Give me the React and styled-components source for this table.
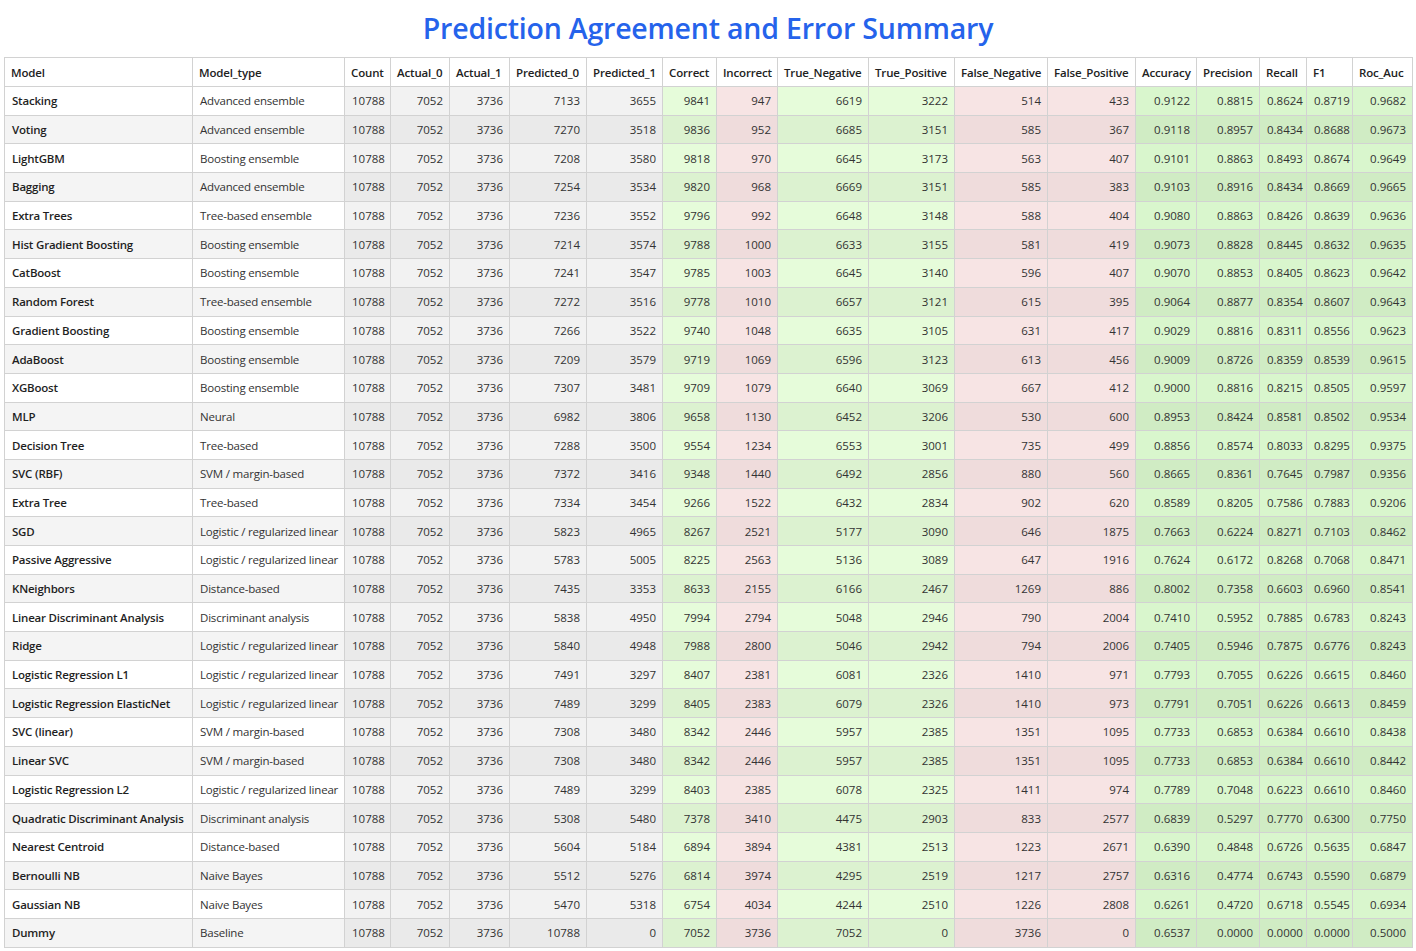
import styled, { createGlobalStyle } from "styled-components";

const GlobalStyle = createGlobalStyle`
  body {
    margin: 0;
    background: #ffffff;
    font-family: "Open Sans", "Noto Sans", sans-serif;
  }
`;

const Page = styled.div`
  padding: 0 4px 4px 4px;
`;

const Title = styled.h2`
  margin: 0;
  height: 57px;
  line-height: 57px;
  text-align: center;
  color: #2563eb;
  font-size: 28.5px;
  font-weight: 600;
  letter-spacing: -0.2px;
`;

const Table = styled.table`
  width: 1408px;
  table-layout: fixed;
  border-collapse: collapse;
  font-size: 11.5px;
  color: #333;
`;

const HeadCell = styled.th`
  height: 28px;
  padding: 0 5px 0 6px;
  border: 1px solid #d2d2d2;
  background: #ffffff;
  color: #222;
  font-weight: 600;
  letter-spacing: -0.15px;
  text-align: left;
  white-space: nowrap;
  overflow: hidden;
`;

const shades = {
  name: ["#ffffff", "#f4f4f4"],
  type: ["#ffffff", "#f4f4f4"],
  count: ["#f2f2f2", "#eaeaea"],
  good: ["#e6fcda", "#dcf2d0"],
  bad: ["#f7e4e4", "#efdcdc"],
  metric: ["#d9f6cd", "#d0ecc4"],
};

const spacing = { name: "-0.2px", type: "-0.2px" };

const Cell = styled.td`
  height: 27.7px;
  padding: 0 6px 0 7px;
  border: 1px solid #d2d2d2;
  background: ${(p) => shades[p.$kind][p.$even ? 1 : 0]};
  font-weight: ${(p) => (p.$kind === "name" ? 600 : 400)};
  letter-spacing: ${(p) => spacing[p.$kind] || "0"};
  color: ${(p) => (p.$kind === "name" ? "#1f1f1f" : "#333")};
  text-align: ${(p) => (p.$kind === "name" || p.$kind === "type" ? "left" : "right")};
  white-space: nowrap;
  overflow: hidden;
`;

const columns = [
  { key: "Model", width: 188, kind: "name" },
  { key: "Model_type", width: 152, kind: "type" },
  { key: "Count", width: 46, kind: "count" },
  { key: "Actual_0", width: 59, kind: "count" },
  { key: "Actual_1", width: 60, kind: "count" },
  { key: "Predicted_0", width: 77, kind: "count" },
  { key: "Predicted_1", width: 76, kind: "count" },
  { key: "Correct", width: 54, kind: "good" },
  { key: "Incorrect", width: 61, kind: "bad" },
  { key: "True_Negative", width: 91, kind: "good" },
  { key: "True_Positive", width: 86, kind: "good" },
  { key: "False_Negative", width: 93, kind: "bad" },
  { key: "False_Positive", width: 88, kind: "bad" },
  { key: "Accuracy", width: 61, kind: "metric" },
  { key: "Precision", width: 63, kind: "metric" },
  { key: "Recall", width: 47, kind: "metric" },
  { key: "F1", width: 46, kind: "metric" },
  { key: "Roc_Auc", width: 60, kind: "metric" },
];

const LOG = "Logistic / regularized linear";

// model, type, predicted_0, predicted_1, correct, incorrect, tn, tp, fn, fp, acc, prec, rec, f1, auc
const raw = [
  ["Stacking", "Advanced ensemble", 7133, 3655, 9841, 947, 6619, 3222, 514, 433, "0.9122", "0.8815", "0.8624", "0.8719", "0.9682"],
  ["Voting", "Advanced ensemble", 7270, 3518, 9836, 952, 6685, 3151, 585, 367, "0.9118", "0.8957", "0.8434", "0.8688", "0.9673"],
  ["LightGBM", "Boosting ensemble", 7208, 3580, 9818, 970, 6645, 3173, 563, 407, "0.9101", "0.8863", "0.8493", "0.8674", "0.9649"],
  ["Bagging", "Advanced ensemble", 7254, 3534, 9820, 968, 6669, 3151, 585, 383, "0.9103", "0.8916", "0.8434", "0.8669", "0.9665"],
  ["Extra Trees", "Tree-based ensemble", 7236, 3552, 9796, 992, 6648, 3148, 588, 404, "0.9080", "0.8863", "0.8426", "0.8639", "0.9636"],
  ["Hist Gradient Boosting", "Boosting ensemble", 7214, 3574, 9788, 1000, 6633, 3155, 581, 419, "0.9073", "0.8828", "0.8445", "0.8632", "0.9635"],
  ["CatBoost", "Boosting ensemble", 7241, 3547, 9785, 1003, 6645, 3140, 596, 407, "0.9070", "0.8853", "0.8405", "0.8623", "0.9642"],
  ["Random Forest", "Tree-based ensemble", 7272, 3516, 9778, 1010, 6657, 3121, 615, 395, "0.9064", "0.8877", "0.8354", "0.8607", "0.9643"],
  ["Gradient Boosting", "Boosting ensemble", 7266, 3522, 9740, 1048, 6635, 3105, 631, 417, "0.9029", "0.8816", "0.8311", "0.8556", "0.9623"],
  ["AdaBoost", "Boosting ensemble", 7209, 3579, 9719, 1069, 6596, 3123, 613, 456, "0.9009", "0.8726", "0.8359", "0.8539", "0.9615"],
  ["XGBoost", "Boosting ensemble", 7307, 3481, 9709, 1079, 6640, 3069, 667, 412, "0.9000", "0.8816", "0.8215", "0.8505", "0.9597"],
  ["MLP", "Neural", 6982, 3806, 9658, 1130, 6452, 3206, 530, 600, "0.8953", "0.8424", "0.8581", "0.8502", "0.9534"],
  ["Decision Tree", "Tree-based", 7288, 3500, 9554, 1234, 6553, 3001, 735, 499, "0.8856", "0.8574", "0.8033", "0.8295", "0.9375"],
  ["SVC (RBF)", "SVM / margin-based", 7372, 3416, 9348, 1440, 6492, 2856, 880, 560, "0.8665", "0.8361", "0.7645", "0.7987", "0.9356"],
  ["Extra Tree", "Tree-based", 7334, 3454, 9266, 1522, 6432, 2834, 902, 620, "0.8589", "0.8205", "0.7586", "0.7883", "0.9206"],
  ["SGD", LOG, 5823, 4965, 8267, 2521, 5177, 3090, 646, 1875, "0.7663", "0.6224", "0.8271", "0.7103", "0.8462"],
  ["Passive Aggressive", LOG, 5783, 5005, 8225, 2563, 5136, 3089, 647, 1916, "0.7624", "0.6172", "0.8268", "0.7068", "0.8471"],
  ["KNeighbors", "Distance-based", 7435, 3353, 8633, 2155, 6166, 2467, 1269, 886, "0.8002", "0.7358", "0.6603", "0.6960", "0.8541"],
  ["Linear Discriminant Analysis", "Discriminant analysis", 5838, 4950, 7994, 2794, 5048, 2946, 790, 2004, "0.7410", "0.5952", "0.7885", "0.6783", "0.8243"],
  ["Ridge", LOG, 5840, 4948, 7988, 2800, 5046, 2942, 794, 2006, "0.7405", "0.5946", "0.7875", "0.6776", "0.8243"],
  ["Logistic Regression L1", LOG, 7491, 3297, 8407, 2381, 6081, 2326, 1410, 971, "0.7793", "0.7055", "0.6226", "0.6615", "0.8460"],
  ["Logistic Regression ElasticNet", LOG, 7489, 3299, 8405, 2383, 6079, 2326, 1410, 973, "0.7791", "0.7051", "0.6226", "0.6613", "0.8459"],
  ["SVC (linear)", "SVM / margin-based", 7308, 3480, 8342, 2446, 5957, 2385, 1351, 1095, "0.7733", "0.6853", "0.6384", "0.6610", "0.8438"],
  ["Linear SVC", "SVM / margin-based", 7308, 3480, 8342, 2446, 5957, 2385, 1351, 1095, "0.7733", "0.6853", "0.6384", "0.6610", "0.8442"],
  ["Logistic Regression L2", LOG, 7489, 3299, 8403, 2385, 6078, 2325, 1411, 974, "0.7789", "0.7048", "0.6223", "0.6610", "0.8460"],
  ["Quadratic Discriminant Analysis", "Discriminant analysis", 5308, 5480, 7378, 3410, 4475, 2903, 833, 2577, "0.6839", "0.5297", "0.7770", "0.6300", "0.7750"],
  ["Nearest Centroid", "Distance-based", 5604, 5184, 6894, 3894, 4381, 2513, 1223, 2671, "0.6390", "0.4848", "0.6726", "0.5635", "0.6847"],
  ["Bernoulli NB", "Naive Bayes", 5512, 5276, 6814, 3974, 4295, 2519, 1217, 2757, "0.6316", "0.4774", "0.6743", "0.5590", "0.6879"],
  ["Gaussian NB", "Naive Bayes", 5470, 5318, 6754, 4034, 4244, 2510, 1226, 2808, "0.6261", "0.4720", "0.6718", "0.5545", "0.6934"],
  ["Dummy", "Baseline", 10788, 0, 7052, 3736, 7052, 0, 3736, 0, "0.6537", "0.0000", "0.0000", "0.0000", "0.5000"],
];

// every model was scored on the same 10788 rows
const rows = raw.map(([model, type, ...rest]) => [model, type, 10788, 7052, 3736, ...rest]);

export default function App() {
  return (
    <Page>
      <GlobalStyle />
      <Title>Prediction Agreement and Error Summary</Title>
      <Table>
        <colgroup>
          {columns.map((c) => (
            <col key={c.key} style={{ width: c.width }} />
          ))}
        </colgroup>
        <thead>
          <tr>
            {columns.map((c) => (
              <HeadCell key={c.key}>{c.key}</HeadCell>
            ))}
          </tr>
        </thead>
        <tbody>
          {rows.map((row, i) => (
            <tr key={row[0]}>
              {row.map((value, j) => (
                <Cell key={columns[j].key} $kind={columns[j].kind} $even={i % 2 === 1}>
                  {value}
                </Cell>
              ))}
            </tr>
          ))}
        </tbody>
      </Table>
    </Page>
  );
}
